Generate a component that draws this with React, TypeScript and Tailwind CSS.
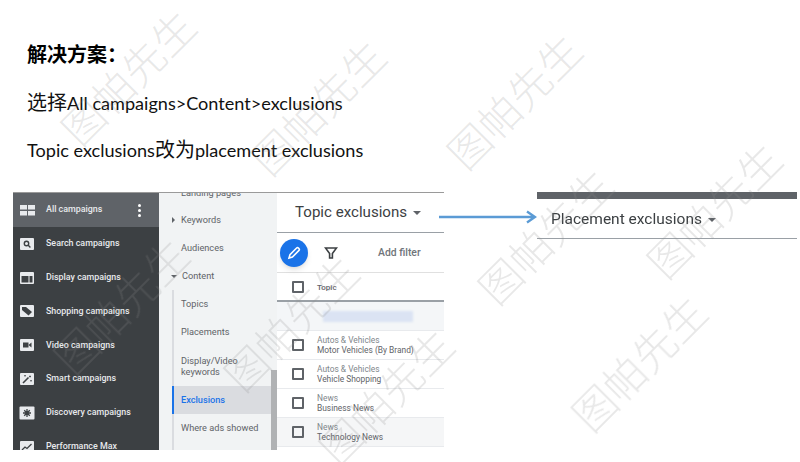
const watermarks = [
  'left-[127px] top-[76px]',
  'left-[317px] top-[106px]',
  'left-[513px] top-[100px]',
  'left-[713px] top-[209px]',
  'left-[544px] top-[235px]',
  'left-[638px] top-[362px]',
  'left-[290px] top-[322px]',
  'left-[385px] top-[395px]',
  'left-[120px] top-[305px]',
];

function Icon({ children }: { children: React.ReactNode }) {
  return (
    <svg width="16" height="16" viewBox="0 0 16 16" className="shrink-0">
      {children}
    </svg>
  );
}

const campaigns = [
  {
    label: 'Search campaigns',
    icon: (
      <>
        <rect x="1" y="2" width="14" height="12" rx="1" fill="#e8eaed" />
        <circle cx="7.5" cy="7.5" r="2.2" fill="none" stroke="#3c4043" strokeWidth="1.4" />
        <path d="M9 9l2.4 2.4" stroke="#3c4043" strokeWidth="1.4" />
      </>
    ),
  },
  {
    label: 'Display campaigns',
    icon: (
      <>
        <rect x="1" y="2" width="14" height="12" rx="1" fill="#e8eaed" />
        <rect x="2.5" y="6" width="7" height="6.5" fill="#3c4043" />
        <rect x="10.5" y="6" width="3" height="6.5" fill="#3c4043" />
      </>
    ),
  },
  {
    label: 'Shopping campaigns',
    icon: (
      <>
        <rect x="1" y="2" width="14" height="12" rx="1" fill="#e8eaed" />
        <path d="M3 4h4l6 5-3.5 3.5L3 7z" fill="#3c4043" />
      </>
    ),
  },
  {
    label: 'Video campaigns',
    icon: (
      <>
        <rect x="1" y="2" width="14" height="12" rx="1" fill="#e8eaed" />
        <rect x="4" y="5.5" width="5.5" height="5" fill="#3c4043" />
        <path d="M9.5 8l3-2.4v4.8z" fill="#3c4043" />
      </>
    ),
  },
  {
    label: 'Smart campaigns',
    icon: (
      <>
        <rect x="1" y="2" width="14" height="12" rx="1" fill="#e8eaed" />
        <path d="M4 12l5.5-5.5" stroke="#3c4043" strokeWidth="1.6" />
        <path d="M11 4.5v2M10 5.5h2M12 9v1.5M11.3 9.7h1.5M6 4v1.5M5.3 4.7h1.5" stroke="#3c4043" strokeWidth="0.8" />
      </>
    ),
  },
  {
    label: 'Discovery campaigns',
    icon: (
      <>
        <rect x="0.5" y="1.5" width="15" height="13" rx="1" fill="#e8eaed" />
        <path d="M8 4v8M4 8h8M5.2 5.2l5.6 5.6M10.8 5.2l-5.6 5.6" stroke="#3c4043" strokeWidth="1.3" />
      </>
    ),
  },
  {
    label: 'Performance Max',
    icon: (
      <>
        <rect x="1" y="2" width="14" height="12" rx="1" fill="#e8eaed" />
        <path d="M3 11l3-3 2 1.5L12.5 5" fill="none" stroke="#3c4043" strokeWidth="1.3" />
      </>
    ),
  },
];

const rows = [
  { top: 'Autos & Vehicles', bottom: 'Motor Vehicles (By Brand)', shaded: false },
  { top: 'Autos & Vehicles', bottom: 'Vehicle Shopping', shaded: false },
  { top: 'News', bottom: 'Business News', shaded: false },
  { top: 'News', bottom: 'Technology News', shaded: true },
];

function Checkbox() {
  return <div className="h-[12px] w-[12px] shrink-0 rounded-[1px] border-2 border-[#5f6368]" />;
}

function Sidebar() {
  return (
    <div className="flex h-full w-[146px] shrink-0 flex-col overflow-hidden bg-[#3c4043] text-[8.9px] font-medium text-[#e8eaed]">
      <div className="flex h-[34px] shrink-0 items-center bg-[#5f6368] pl-[7px] pr-[18px]">
        <svg width="15" height="11" viewBox="0 0 15 11" className="shrink-0">
          <path d="M0 0h7v4.5H0zM8 0h7v4.5H8zM0 6h7v4.5H0zM8 6h7v4.5H8z" fill="#e8eaed" />
        </svg>
        <span className="ml-[11px] flex-1">All campaigns</span>
        <div className="flex flex-col gap-[2px]">
          <div className="h-[3px] w-[3px] rounded-full bg-white" />
          <div className="h-[3px] w-[3px] rounded-full bg-white" />
          <div className="h-[3px] w-[3px] rounded-full bg-white" />
        </div>
      </div>
      {campaigns.map((c) => (
        <div key={c.label} className="flex h-[33.8px] shrink-0 items-center pl-[6px]">
          <Icon>{c.icon}</Icon>
          <span className="ml-[11px] whitespace-nowrap">{c.label}</span>
        </div>
      ))}
    </div>
  );
}

function SideNav() {
  return (
    <div className="relative flex h-full w-[118px] shrink-0 flex-col overflow-hidden bg-[#f1f3f4] text-[9.2px] text-[#5f6368]">
      {/* scrolled list, first item is cut by the top edge */}
      <div className="flex h-[13px] shrink-0 items-start overflow-hidden pl-[22px] leading-none">
        <span className="-translate-y-[5px]">Landing pages</span>
      </div>
      <div className="flex h-[28px] shrink-0 items-center pl-[13px]">
        <div className="mr-[6px] h-0 w-0 border-y-[3px] border-l-[3px] border-y-transparent border-l-[#5f6368]" />
        Keywords
      </div>
      <div className="flex h-[28px] shrink-0 items-center pl-[22px]">Audiences</div>
      <div className="flex h-[28px] shrink-0 items-center pl-[12px]">
        <div className="mr-[5px] h-0 w-0 border-x-[3px] border-t-[3px] border-x-transparent border-t-[#5f6368]" />
        Content
      </div>
      <div className="ml-[13px] flex flex-col border-l-2 border-[#dadce0]">
        <div className="flex h-[28px] items-center pl-[7px]">Topics</div>
        <div className="flex h-[28px] items-center pl-[7px]">Placements</div>
        <div className="flex h-[40px] items-center pl-[7px] leading-[11.5px]">
          Display/Video
          <br />
          keywords
        </div>
        <div className="-ml-[2px] flex h-[28px] items-center border-l-2 border-[#1a73e8] bg-[#dadce0] pl-[7px] font-medium text-[#1a73e8]">
          Exclusions
        </div>
        <div className="flex h-[28px] items-center pl-[7px]">Where ads showed</div>
        <div className="h-[14px]" />
      </div>
      {/* scrollbar */}
      <div className="absolute bottom-0 right-0 h-[80px] w-[6px] bg-[#b0b2b4]" />
    </div>
  );
}

function MainPanel() {
  return (
    <div className="flex h-full min-w-0 flex-1 flex-col overflow-hidden bg-white text-[#5f6368]">
      <div className="flex h-[40px] shrink-0 items-center border-b border-[#9aa0a6] pl-[18px] text-[15.1px] text-[#3c4043]">
        Topic exclusions
        <div className="ml-[6px] h-0 w-0 border-x-[4px] border-t-[4px] border-x-transparent border-t-[#5f6368]" />
      </div>
      <div className="flex h-[40px] shrink-0 items-center border-b border-[#e0e0e0] pl-[3px]">
        <div className="flex h-[28px] w-[28px] items-center justify-center rounded-full bg-[#1a73e8] shadow-md">
          <svg width="16" height="16" viewBox="0 0 16 16">
            <path d="M3 13l1-3.4 6.6-6.6a1.2 1.2 0 0 1 1.8 0l.6.6a1.2 1.2 0 0 1 0 1.8L6.4 12z" fill="none" stroke="#fff" strokeWidth="1.6" />
          </svg>
        </div>
        <svg width="14" height="14" viewBox="0 0 14 14" className="ml-[16px]">
          <path d="M1.5 2h11L8.4 7.4V12H5.6V7.4z" fill="none" stroke="#3c4043" strokeWidth="1.6" />
        </svg>
        <span className="ml-[40px] text-[10.4px] font-medium text-[#70757a]">Add filter</span>
      </div>
      <div className="flex h-[29px] shrink-0 items-center border-b-2 border-[#9aa0a6] pl-[15px] text-[8px] font-medium">
        <Checkbox />
        <span className="ml-[13px] translate-y-[1px]">Topic</span>
      </div>
      <div className="flex h-[29px] shrink-0 items-center border-b border-[#e8eaed] bg-[#f4f6f8] pl-[46px]">
        <div className="h-[11px] w-[90px] bg-[#dbe3f3] blur-[1px]" />
      </div>
      {rows.map((r) => (
        <div
          key={r.bottom}
          className={`flex h-[29px] shrink-0 items-center border-b border-[#e8eaed] pl-[15px] text-[8.4px] leading-[10px] ${r.shaded ? 'bg-[#f5f6f7]' : ''}`}
        >
          <Checkbox />
          <div className="ml-[13px] whitespace-nowrap">
            <div className="text-[#80868b]">{r.top}</div>
            <div>{r.bottom}</div>
          </div>
        </div>
      ))}
    </div>
  );
}

export default function App() {
  return (
    <div className="relative h-[462px] w-[800px] overflow-hidden bg-white font-['Lato','Noto_Sans_CJK_SC',sans-serif] text-[#111]">
      <div className="flex flex-col pl-[27px] pt-[40px] text-[18.1px] leading-[28px]">
        <h1 className="text-[20px] font-bold text-black">解决方案：</h1>
        <p className="mt-[20px]">
          <span className="text-[20px]">选择</span>All campaigns&gt;Content&gt;exclusions
        </p>
        <p className="mt-[18px]">
          Topic exclusions<span className="text-[20px]">改为</span>placement exclusions
        </p>
      </div>

      <div className="mt-[28px] flex items-start pl-[13px] font-['Roboto',sans-serif] blur-[0.4px]">
        <div className="flex h-[258px] w-[431px] border-t border-[#9a9a9a]">
          <Sidebar />
          <SideNav />
          <MainPanel />
        </div>

        <svg width="98" height="14" viewBox="0 0 98 14" className="z-10 -ml-[5px] mt-[18px] shrink-0">
          <path d="M0 7h96M88 1.5L96 7l-8 5.5" fill="none" stroke="#5b9bd5" strokeWidth="2.4" />
        </svg>

        <div className="flex h-[47px] w-[260px] shrink-0 flex-col border-b border-[#9aa0a6]">
          <div className="h-[7px] shrink-0 bg-[#5f6368]" />
          <div className="flex flex-1 translate-y-[1px] items-center pl-[14px] text-[15.5px] text-[#3c4043]">
            Placement exclusions
            <div className="ml-[6px] h-0 w-0 border-x-[4px] border-t-[4px] border-x-transparent border-t-[#5f6368]" />
          </div>
        </div>
      </div>

      {watermarks.map((pos) => (
        <div
          key={pos}
          className={`pointer-events-none absolute ${pos} -translate-x-1/2 -translate-y-1/2 -rotate-45 whitespace-nowrap text-[42px] leading-none text-[#8a8a8a]/20 font-['Noto_Sans_CJK_SC',sans-serif] font-light`}
        >
          图帕先生
        </div>
      ))}
    </div>
  );
}
